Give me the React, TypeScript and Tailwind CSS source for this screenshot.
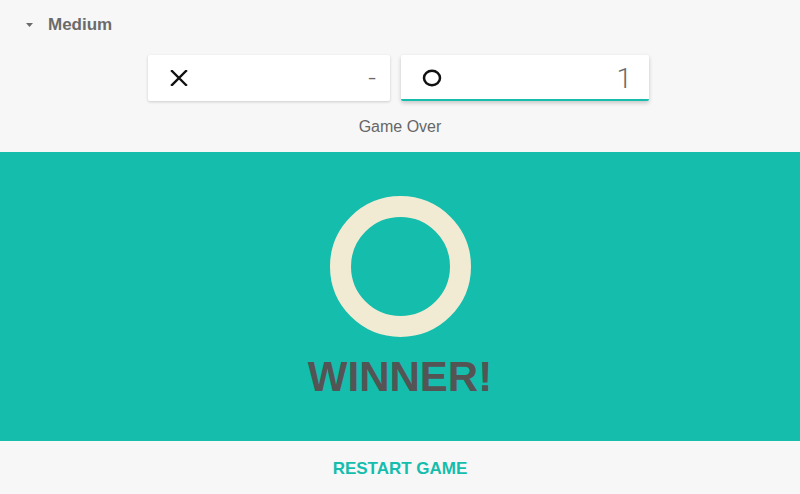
export default function App() {
  return (
    <div className="w-[800px] h-[494px] bg-[#f7f7f7] flex flex-col font-['Liberation_Sans',Arial,sans-serif] overflow-hidden">
      {/* difficulty selector */}
      <div className="h-[46px] pt-[3px] flex items-center pl-[26px] gap-[15px] text-[#6b6b6b]">
        <svg width="7" height="4" viewBox="0 0 7 4" className="mt-[1px]">
          <path d="M0 0 L7 0 L3.5 4 Z" fill="#6b6b6b" />
        </svg>
        <span className="text-[17px] font-bold">Medium</span>
      </div>

      {/* score boxes */}
      <div className="flex justify-center gap-[11px] mt-[9px] pr-[3px]">
        <div className="w-[242px] h-[46px] bg-white rounded-[2px] shadow-[0_1px_3px_rgba(0,0,0,0.18)] flex items-center justify-between pl-[22px] pr-[14px]">
          <svg width="18" height="16" viewBox="0 0 18 16">
            <path d="M2 1 L16 15 M16 1 L2 15" stroke="#111" strokeWidth="2.4" strokeLinecap="square" />
          </svg>
          <span className="text-[27px] font-light text-[#6a6a6a] font-['Roboto',sans-serif] leading-none">-</span>
        </div>
        <div className="w-[248px] h-[46px] bg-white rounded-[2px] shadow-[0_2px_4px_rgba(0,0,0,0.2)] border-b-2 border-[#14bdac] flex items-center justify-between pl-[21px] pr-[17px]">
          <svg width="20" height="18" viewBox="0 0 20 18" className="mt-[2px]">
            <ellipse cx="10" cy="9" rx="8" ry="7.2" fill="none" stroke="#111" strokeWidth="2.5" />
          </svg>
          <span className="text-[28px] font-light text-[#6a6a6a] font-['Roboto',sans-serif] leading-none mt-[3px]">1</span>
        </div>
      </div>

      <div className="text-center text-[16px] text-[#666] mt-[16px] leading-[20px]">Game Over</div>

      {/* result panel */}
      <div className="mt-[15px] h-[289px] bg-[#14bdac] flex flex-col items-center">
        <div className="mt-[44px] w-[141px] h-[141px] rounded-full border-[21px] border-[#f2ebd3]" />
        <div className="mt-[16px] text-[42px] font-bold text-[#545454] leading-[48px]">WINNER!</div>
      </div>

      <div className="flex-1 flex items-center justify-center pt-[3px]">
        <span className="text-[17px] font-bold text-[#14bdac]">RESTART GAME</span>
      </div>
    </div>
  );
}
